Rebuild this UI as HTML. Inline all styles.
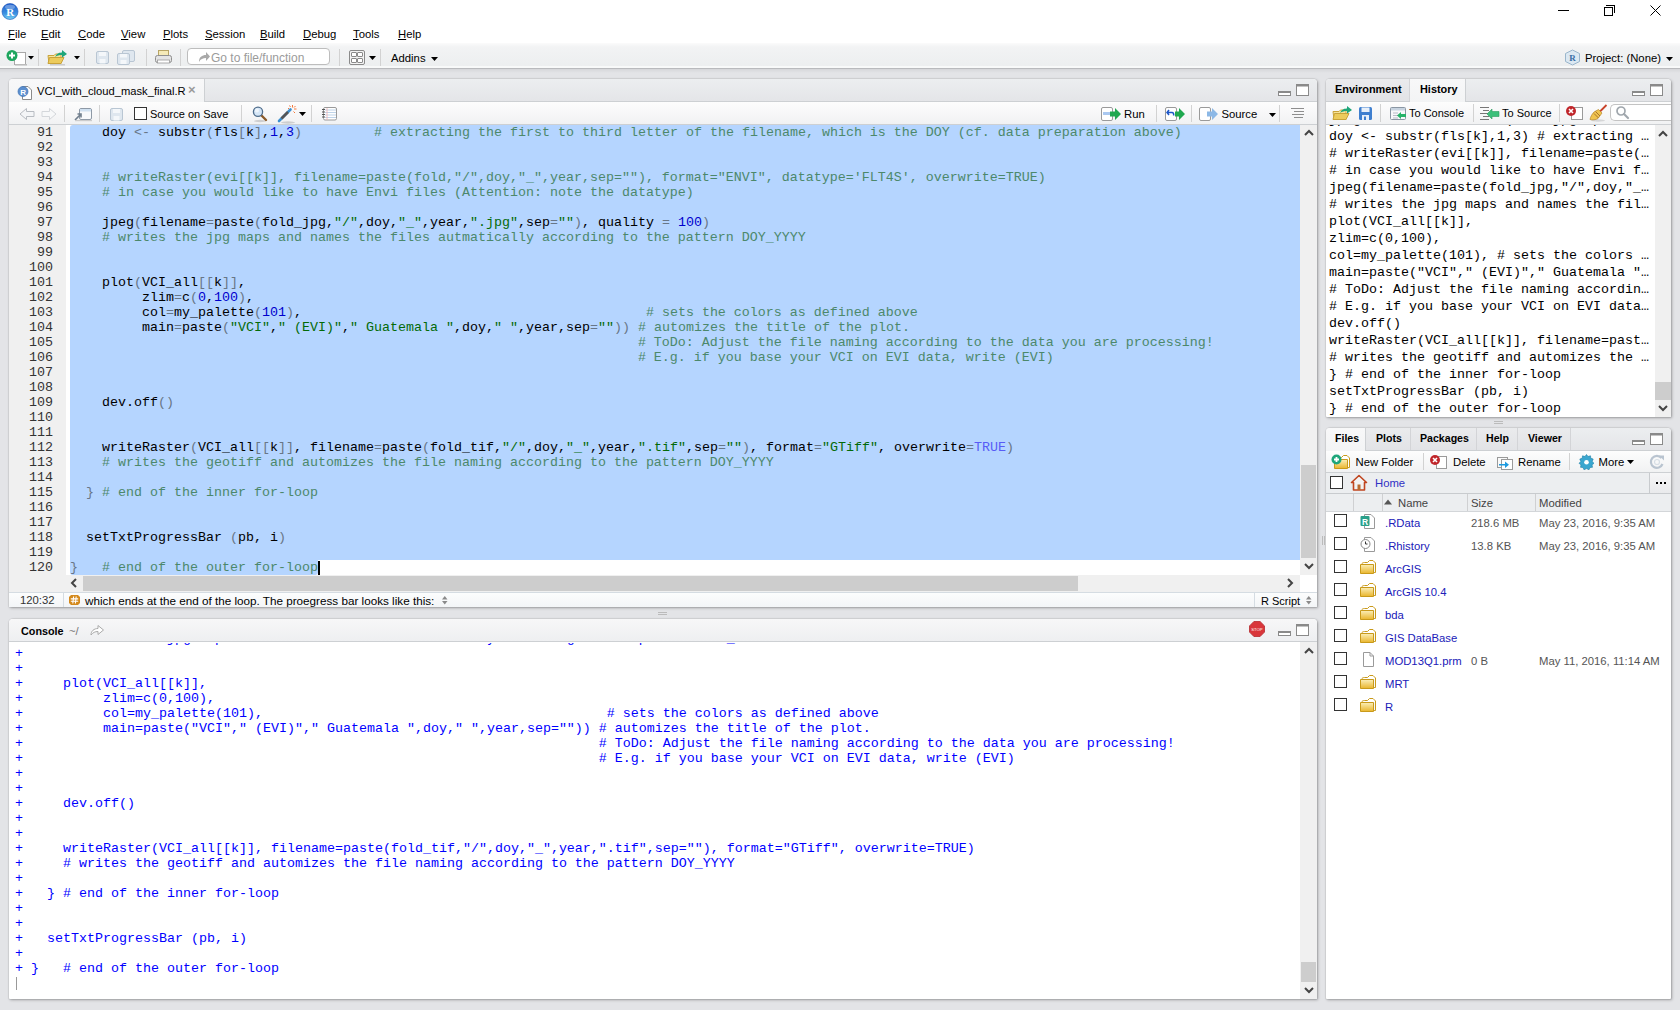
<!DOCTYPE html><html><head><meta charset="utf-8"><style>
*{box-sizing:border-box}
body{margin:0;width:1680px;height:1010px;overflow:hidden;background:#e3e4e7;position:relative;font-family:"Liberation Sans",sans-serif;font-size:12px;color:#000}
.a{position:absolute}
i{font-style:normal}
.mono{font-family:"Liberation Mono",monospace;font-size:13.33px;white-space:pre}
.c{color:#4C886B}.s{color:#036A07}.n{color:#0000CD}.k{color:#585CF6}.o{color:#687687}
.ln{position:absolute;height:15px;line-height:15px}
.pane{position:absolute;background:#fff;border-radius:4px 4px 1px 1px;box-shadow:0 0 0 1px rgba(0,0,0,.05),1px 1px 3px rgba(0,0,0,.3)}
u{text-decoration:underline}
</style></head><body>
<div class=a style="left:0px;top:0px;width:1680px;height:43px;background:#fff"></div>
<svg class=a style="left:1px;top:2px;" width="18" height="18" viewBox="0 0 18 18"><defs><linearGradient id="rg" x1="0" y1="0" x2="0" y2="1"><stop offset="0" stop-color="#1f5ecc"/><stop offset=".6" stop-color="#3a8ee0"/><stop offset="1" stop-color="#78d2f2"/></linearGradient></defs><circle cx="9" cy="9.5" r="8" fill="url(#rg)" stroke="#1a50b8" stroke-width=".6"/><ellipse cx="9" cy="5" rx="5" ry="2.2" fill="#fff" opacity=".3"/><text x="9.3" y="13.6" font-family="Liberation Serif" font-weight="bold" font-size="11" fill="#fff" text-anchor="middle">R</text></svg>
<div class=a style="left:1558px;top:10px;width:11px;height:1px;background:#000"></div>
<div class=a style="left:1606px;top:5px;width:9px;height:8px;border-top:1px solid #000;border-right:1px solid #000"></div>
<div class=a style="left:1604px;top:7px;width:9px;height:9px;border:1px solid #000;background:#fff"></div>
<svg class=a style="left:1650px;top:5px;" width="11" height="11" viewBox="0 0 11 11"><path d="M.5 .5L10.5 10.5M10.5 .5L.5 10.5" stroke="#000" stroke-width="1"/></svg>
<div class=a style="left:0px;top:43px;width:1680px;height:26px;background:linear-gradient(#fbfbfb 0,#f2f3f4 4px,#eceeef);border-bottom:1px solid #b9babd;box-shadow:inset 0 -2px 0 #f8f9f9"></div>
<div class=a style="left:0px;top:69px;width:1680px;height:4px;background:linear-gradient(rgba(0,0,0,.06),rgba(0,0,0,0))"></div>
<div class=a style="left:187px;top:48px;width:143px;height:17px;border:1px solid #bdbdbd;border-radius:4px;background:#fff"></div>
<div class=pane style="left:9px;top:79px;width:1308px;height:528px;"></div>
<div class=a style="left:9px;top:79px;width:1308px;height:23px;background:linear-gradient(#eceef0,#e4e5e8);border-bottom:1px solid #cdd0d3;border-radius:4px 4px 0 0"></div>
<div class=a style="left:9px;top:79px;width:196px;height:23px;background:linear-gradient(#f8f8f9,#f3f4f5);border-right:1px solid #cdd0d3;border-radius:4px 0 0 0"></div>
<svg class=a style="left:1276px;top:83px;" width="34" height="14" viewBox="0 0 34 14"><rect x="2.5" y="9.5" width="12" height="3" fill="#fff" stroke="#8a8a8a"/><rect x="2" y="8" width="13" height="2" fill="#8a8a8a"/><rect x="20.5" y="1.5" width="12" height="11" fill="#fff" stroke="#8a8a8a"/><rect x="20" y="1" width="13" height="2.5" fill="#8a8a8a"/></svg>
<div class=a style="left:9px;top:102px;width:1308px;height:23px;background:linear-gradient(#fdfdfd,#f1f2f3);border-bottom:1px solid #cdd0d3"></div>
<svg class=a style="left:17px;top:84px;" width="17" height="16" viewBox="0 0 17 16"><path d="M5.5 2.5H11L14.5 6V15.5H5.5Z" fill="#fff" stroke="#8a8a8a"/><circle cx="6" cy="7.5" r="5" fill="#5b8fcf" stroke="#3f72b3" stroke-width=".7"/><text x="6.1" y="10.6" font-size="8" font-family="Liberation Sans" font-weight="bold" fill="#fff" text-anchor="middle">R</text></svg>
<div class=a style="left:9px;top:125px;width:57px;height:450px;background:#f0f0f0"></div>
<div class=a style="left:70px;top:125px;width:1230px;height:435px;background:#B5D5FF;border-radius:3px 0 0 0"></div>
<div class=a style="left:70px;top:560px;width:248px;height:15px;background:#B5D5FF;border-radius:0 0 3px 3px"></div>
<div class=a style="left:318px;top:561px;width:2px;height:14px;background:#000"></div>
<div class="a mono" style="left:9px;top:125px;width:1291px;height:450px;overflow:hidden">
<div class=ln style="top:0px;left:0;width:44px;text-align:right;color:#333">91</div>
<div class=ln style="top:0px;left:61px">    doy <i class=o>&lt;-</i> substr<i class=o>(</i>fls<i class=o>[</i>k<i class=o>]</i>,<i class=n>1</i>,<i class=n>3</i><i class=o>)</i>         <i class=c># extracting the first to third letter of the filename, which is the DOY (cf. data preparation above)</i></div>
<div class=ln style="top:15px;left:0;width:44px;text-align:right;color:#333">92</div>
<div class=ln style="top:15px;left:61px"></div>
<div class=ln style="top:30px;left:0;width:44px;text-align:right;color:#333">93</div>
<div class=ln style="top:30px;left:61px"></div>
<div class=ln style="top:45px;left:0;width:44px;text-align:right;color:#333">94</div>
<div class=ln style="top:45px;left:61px">    <i class=c># writeRaster(evi[[k]], filename=paste(fold,&quot;/&quot;,doy,&quot;_&quot;,year,sep=&quot;&quot;), format=&quot;ENVI&quot;, datatype=&#x27;FLT4S&#x27;, overwrite=TRUE)</i></div>
<div class=ln style="top:60px;left:0;width:44px;text-align:right;color:#333">95</div>
<div class=ln style="top:60px;left:61px">    <i class=c># in case you would like to have Envi files (Attention: note the datatype)</i></div>
<div class=ln style="top:75px;left:0;width:44px;text-align:right;color:#333">96</div>
<div class=ln style="top:75px;left:61px"></div>
<div class=ln style="top:90px;left:0;width:44px;text-align:right;color:#333">97</div>
<div class=ln style="top:90px;left:61px">    jpeg<i class=o>(</i>filename<i class=o>=</i>paste<i class=o>(</i>fold_jpg,<i class=s>&quot;/&quot;</i>,doy,<i class=s>&quot;_&quot;</i>,year,<i class=s>&quot;.jpg&quot;</i>,sep<i class=o>=</i><i class=s>&quot;&quot;</i><i class=o>)</i>, quality <i class=o>=</i> <i class=n>100</i><i class=o>)</i></div>
<div class=ln style="top:105px;left:0;width:44px;text-align:right;color:#333">98</div>
<div class=ln style="top:105px;left:61px">    <i class=c># writes the jpg maps and names the files autmatically according to the pattern DOY_YYYY</i></div>
<div class=ln style="top:120px;left:0;width:44px;text-align:right;color:#333">99</div>
<div class=ln style="top:120px;left:61px"></div>
<div class=ln style="top:135px;left:0;width:44px;text-align:right;color:#333">100</div>
<div class=ln style="top:135px;left:61px"></div>
<div class=ln style="top:150px;left:0;width:44px;text-align:right;color:#333">101</div>
<div class=ln style="top:150px;left:61px">    plot<i class=o>(</i>VCI_all<i class=o>[</i><i class=o>[</i>k<i class=o>]</i><i class=o>]</i>,</div>
<div class=ln style="top:165px;left:0;width:44px;text-align:right;color:#333">102</div>
<div class=ln style="top:165px;left:61px">         zlim<i class=o>=</i>c<i class=o>(</i><i class=n>0</i>,<i class=n>100</i><i class=o>)</i>,</div>
<div class=ln style="top:180px;left:0;width:44px;text-align:right;color:#333">103</div>
<div class=ln style="top:180px;left:61px">         col<i class=o>=</i>my_palette<i class=o>(</i><i class=n>101</i><i class=o>)</i>,                                           <i class=c># sets the colors as defined above</i></div>
<div class=ln style="top:195px;left:0;width:44px;text-align:right;color:#333">104</div>
<div class=ln style="top:195px;left:61px">         main<i class=o>=</i>paste<i class=o>(</i><i class=s>&quot;VCI&quot;</i>,<i class=s>&quot; (EVI)&quot;</i>,<i class=s>&quot; Guatemala &quot;</i>,doy,<i class=s>&quot; &quot;</i>,year,sep<i class=o>=</i><i class=s>&quot;&quot;</i><i class=o>)</i><i class=o>)</i> <i class=c># automizes the title of the plot.</i></div>
<div class=ln style="top:210px;left:0;width:44px;text-align:right;color:#333">105</div>
<div class=ln style="top:210px;left:61px">                                                                       <i class=c># ToDo: Adjust the file naming according to the data you are processing!</i></div>
<div class=ln style="top:225px;left:0;width:44px;text-align:right;color:#333">106</div>
<div class=ln style="top:225px;left:61px">                                                                       <i class=c># E.g. if you base your VCI on EVI data, write (EVI)</i></div>
<div class=ln style="top:240px;left:0;width:44px;text-align:right;color:#333">107</div>
<div class=ln style="top:240px;left:61px"></div>
<div class=ln style="top:255px;left:0;width:44px;text-align:right;color:#333">108</div>
<div class=ln style="top:255px;left:61px"></div>
<div class=ln style="top:270px;left:0;width:44px;text-align:right;color:#333">109</div>
<div class=ln style="top:270px;left:61px">    dev.off<i class=o>(</i><i class=o>)</i></div>
<div class=ln style="top:285px;left:0;width:44px;text-align:right;color:#333">110</div>
<div class=ln style="top:285px;left:61px"></div>
<div class=ln style="top:300px;left:0;width:44px;text-align:right;color:#333">111</div>
<div class=ln style="top:300px;left:61px"></div>
<div class=ln style="top:315px;left:0;width:44px;text-align:right;color:#333">112</div>
<div class=ln style="top:315px;left:61px">    writeRaster<i class=o>(</i>VCI_all<i class=o>[</i><i class=o>[</i>k<i class=o>]</i><i class=o>]</i>, filename<i class=o>=</i>paste<i class=o>(</i>fold_tif,<i class=s>&quot;/&quot;</i>,doy,<i class=s>&quot;_&quot;</i>,year,<i class=s>&quot;.tif&quot;</i>,sep<i class=o>=</i><i class=s>&quot;&quot;</i><i class=o>)</i>, format<i class=o>=</i><i class=s>&quot;GTiff&quot;</i>, overwrite<i class=o>=</i><i class=k>TRUE</i><i class=o>)</i></div>
<div class=ln style="top:330px;left:0;width:44px;text-align:right;color:#333">113</div>
<div class=ln style="top:330px;left:61px">    <i class=c># writes the geotiff and automizes the file naming according to the pattern DOY_YYYY</i></div>
<div class=ln style="top:345px;left:0;width:44px;text-align:right;color:#333">114</div>
<div class=ln style="top:345px;left:61px"></div>
<div class=ln style="top:360px;left:0;width:44px;text-align:right;color:#333">115</div>
<div class=ln style="top:360px;left:61px">  <i class=o>}</i> <i class=c># end of the inner for-loop</i></div>
<div class=ln style="top:375px;left:0;width:44px;text-align:right;color:#333">116</div>
<div class=ln style="top:375px;left:61px"></div>
<div class=ln style="top:390px;left:0;width:44px;text-align:right;color:#333">117</div>
<div class=ln style="top:390px;left:61px"></div>
<div class=ln style="top:405px;left:0;width:44px;text-align:right;color:#333">118</div>
<div class=ln style="top:405px;left:61px">  setTxtProgressBar <i class=o>(</i>pb, i<i class=o>)</i></div>
<div class=ln style="top:420px;left:0;width:44px;text-align:right;color:#333">119</div>
<div class=ln style="top:420px;left:61px"></div>
<div class=ln style="top:435px;left:0;width:44px;text-align:right;color:#333">120</div>
<div class=ln style="top:435px;left:61px"><i class=o>}</i>   <i class=c># end of the outer for-loop</i></div>
</div>
<div class=a style="left:1300px;top:125px;width:17px;height:450px;background:#f0f0f0"></div>
<div class=a style="left:1301px;top:465px;width:15px;height:93px;background:#cdcdcd"></div>
<div class=a style="left:9px;top:575px;width:1291px;height:17px;background:#f0f0f0"></div>
<div class=a style="left:83px;top:576px;width:995px;height:15px;background:#cdcdcd"></div>
<div class=a style="left:9px;top:592px;width:1308px;height:15px;background:linear-gradient(#fcfdfd,#f3f5f7);border-top:1px solid #d5dce2"></div>
<div class=a style="left:63px;top:593px;width:1px;height:14px;background:#d5dce2"></div>
<div class=a style="left:1254px;top:593px;width:1px;height:14px;background:#d5dce2"></div>
<div class=pane style="left:9px;top:619px;width:1308px;height:380px;"></div>
<div class=a style="left:9px;top:619px;width:1308px;height:23px;background:linear-gradient(#f7f7f8,#eeeff1);border-bottom:1px solid #cdd0d3;border-radius:4px 4px 0 0"></div>
<svg class=a style="left:1276px;top:623px;" width="34" height="14" viewBox="0 0 34 14"><rect x="2.5" y="9.5" width="12" height="3" fill="#fff" stroke="#8a8a8a"/><rect x="2" y="8" width="13" height="2" fill="#8a8a8a"/><rect x="20.5" y="1.5" width="12" height="11" fill="#fff" stroke="#8a8a8a"/><rect x="20" y="1" width="13" height="2.5" fill="#8a8a8a"/></svg>
<div class="a mono" style="left:9px;top:643px;width:1291px;height:356px;overflow:hidden;color:#0000ff">
<div class=ln style="top:-12px;left:6px">+     # writes the jpg maps and names the files autmatically according to the pattern DOY_YYYY</div>
<div class=ln style="top:3px;left:6px">+ </div>
<div class=ln style="top:18px;left:6px">+ </div>
<div class=ln style="top:33px;left:6px">+     plot(VCI_all[[k]],</div>
<div class=ln style="top:48px;left:6px">+          zlim=c(0,100),</div>
<div class=ln style="top:63px;left:6px">+          col=my_palette(101),                                           # sets the colors as defined above</div>
<div class=ln style="top:78px;left:6px">+          main=paste(&quot;VCI&quot;,&quot; (EVI)&quot;,&quot; Guatemala &quot;,doy,&quot; &quot;,year,sep=&quot;&quot;)) # automizes the title of the plot.</div>
<div class=ln style="top:93px;left:6px">+                                                                        # ToDo: Adjust the file naming according to the data you are processing!</div>
<div class=ln style="top:108px;left:6px">+                                                                        # E.g. if you base your VCI on EVI data, write (EVI)</div>
<div class=ln style="top:123px;left:6px">+ </div>
<div class=ln style="top:138px;left:6px">+ </div>
<div class=ln style="top:153px;left:6px">+     dev.off()</div>
<div class=ln style="top:168px;left:6px">+ </div>
<div class=ln style="top:183px;left:6px">+ </div>
<div class=ln style="top:198px;left:6px">+     writeRaster(VCI_all[[k]], filename=paste(fold_tif,&quot;/&quot;,doy,&quot;_&quot;,year,&quot;.tif&quot;,sep=&quot;&quot;), format=&quot;GTiff&quot;, overwrite=TRUE)</div>
<div class=ln style="top:213px;left:6px">+     # writes the geotiff and automizes the file naming according to the pattern DOY_YYYY</div>
<div class=ln style="top:228px;left:6px">+ </div>
<div class=ln style="top:243px;left:6px">+   } # end of the inner for-loop</div>
<div class=ln style="top:258px;left:6px">+ </div>
<div class=ln style="top:273px;left:6px">+ </div>
<div class=ln style="top:288px;left:6px">+   setTxtProgressBar (pb, i)</div>
<div class=ln style="top:303px;left:6px">+ </div>
<div class=ln style="top:318px;left:6px">+ }   # end of the outer for-loop</div>
</div>
<div class=a style="left:16px;top:977px;width:1px;height:13px;background:#999"></div>
<div class=a style="left:1300px;top:642px;width:17px;height:357px;background:#f0f0f0"></div>
<div class=a style="left:1301px;top:962px;width:15px;height:20px;background:#cdcdcd"></div>
<div class=pane style="left:1326px;top:79px;width:345px;height:338px;"></div>
<div class=a style="left:1326px;top:79px;width:345px;height:23px;background:linear-gradient(#eceef0,#e4e5e8);border-bottom:1px solid #cdd0d3;border-radius:4px 4px 0 0"></div>
<div class=a style="left:1326px;top:79px;width:84px;height:22px;background:linear-gradient(#eaebed,#e2e3e6);border-right:1px solid #d3d4d7;border-radius:4px 0 0 0"></div>
<div class=a style="left:1410px;top:79px;width:56px;height:23px;background:linear-gradient(#f8f8f9,#f3f4f5);border-right:1px solid #cdd0d3"></div>
<svg class=a style="left:1630px;top:83px;" width="34" height="14" viewBox="0 0 34 14"><rect x="2.5" y="9.5" width="12" height="3" fill="#fff" stroke="#8a8a8a"/><rect x="2" y="8" width="13" height="2" fill="#8a8a8a"/><rect x="20.5" y="1.5" width="12" height="11" fill="#fff" stroke="#8a8a8a"/><rect x="20" y="1" width="13" height="2.5" fill="#8a8a8a"/></svg>
<div class=a style="left:1326px;top:102px;width:345px;height:23px;background:linear-gradient(#fdfdfd,#f1f2f3);border-bottom:1px solid #cdd0d3"></div>
<div class="a mono" style="left:1326px;top:125px;width:329px;height:292px;overflow:hidden">
<div class=a style="top:-14px;left:3px;height:17px;line-height:17px">jpeg_fls &lt;- list.files(fold_jpg, pattern=&quot;.jpg&quot;) # ...</div>
<div class=a style="top:3px;left:3px;height:17px;line-height:17px">doy &lt;- substr(fls[k],1,3) # extracting …</div>
<div class=a style="top:20px;left:3px;height:17px;line-height:17px"># writeRaster(evi[[k]], filename=paste(…</div>
<div class=a style="top:37px;left:3px;height:17px;line-height:17px"># in case you would like to have Envi f…</div>
<div class=a style="top:54px;left:3px;height:17px;line-height:17px">jpeg(filename=paste(fold_jpg,&quot;/&quot;,doy,&quot;_…</div>
<div class=a style="top:71px;left:3px;height:17px;line-height:17px"># writes the jpg maps and names the fil…</div>
<div class=a style="top:88px;left:3px;height:17px;line-height:17px">plot(VCI_all[[k]],</div>
<div class=a style="top:105px;left:3px;height:17px;line-height:17px">zlim=c(0,100),</div>
<div class=a style="top:122px;left:3px;height:17px;line-height:17px">col=my_palette(101), # sets the colors …</div>
<div class=a style="top:139px;left:3px;height:17px;line-height:17px">main=paste(&quot;VCI&quot;,&quot; (EVI)&quot;,&quot; Guatemala &quot;…</div>
<div class=a style="top:156px;left:3px;height:17px;line-height:17px"># ToDo: Adjust the file naming accordin…</div>
<div class=a style="top:173px;left:3px;height:17px;line-height:17px"># E.g. if you base your VCI on EVI data…</div>
<div class=a style="top:190px;left:3px;height:17px;line-height:17px">dev.off()</div>
<div class=a style="top:207px;left:3px;height:17px;line-height:17px">writeRaster(VCI_all[[k]], filename=past…</div>
<div class=a style="top:224px;left:3px;height:17px;line-height:17px"># writes the geotiff and automizes the …</div>
<div class=a style="top:241px;left:3px;height:17px;line-height:17px">} # end of the inner for-loop</div>
<div class=a style="top:258px;left:3px;height:17px;line-height:17px">setTxtProgressBar (pb, i)</div>
<div class=a style="top:275px;left:3px;height:17px;line-height:17px">} # end of the outer for-loop</div>
</div>
<div class=a style="left:1655px;top:125px;width:16px;height:292px;background:#f0f0f0"></div>
<div class=a style="left:1655px;top:382px;width:16px;height:18px;background:#cdcdcd"></div>
<div class=pane style="left:1326px;top:428px;width:345px;height:571px;"></div>
<div class=a style="left:1326px;top:428px;width:345px;height:23px;background:linear-gradient(#eceef0,#e4e5e8);border-bottom:1px solid #cdd0d3;border-radius:4px 4px 0 0"></div>
<div class=a style="left:1326px;top:428px;width:40px;height:23px;background:linear-gradient(#f8f8f9,#f3f4f5);border-right:1px solid #cdd0d3;border-radius:4px 0 0 0"></div>
<div class=a style="left:1366px;top:428px;width:45px;height:22px;background:linear-gradient(#eaebed,#e2e3e6);border-right:1px solid #d3d4d7"></div>
<div class=a style="left:1411px;top:428px;width:66px;height:22px;background:linear-gradient(#eaebed,#e2e3e6);border-right:1px solid #d3d4d7"></div>
<div class=a style="left:1477px;top:428px;width:41px;height:22px;background:linear-gradient(#eaebed,#e2e3e6);border-right:1px solid #d3d4d7"></div>
<div class=a style="left:1518px;top:428px;width:53px;height:22px;background:linear-gradient(#eaebed,#e2e3e6);border-right:1px solid #d3d4d7"></div>
<svg class=a style="left:1630px;top:432px;" width="34" height="14" viewBox="0 0 34 14"><rect x="2.5" y="9.5" width="12" height="3" fill="#fff" stroke="#8a8a8a"/><rect x="2" y="8" width="13" height="2" fill="#8a8a8a"/><rect x="20.5" y="1.5" width="12" height="11" fill="#fff" stroke="#8a8a8a"/><rect x="20" y="1" width="13" height="2.5" fill="#8a8a8a"/></svg>
<div class=a style="left:1326px;top:451px;width:345px;height:22px;background:linear-gradient(#fdfdfd,#f1f2f3);border-bottom:1px solid #cdd0d3"></div>
<svg class=a style="left:4px;top:49px;" width="28" height="17" viewBox="0 0 28 17"><rect x="10.5" y="3.5" width="11" height="12" fill="#fff" stroke="#a8a8a8"/><rect x="11" y="15" width="12" height="1.5" fill="#bbb"/><circle cx="8" cy="6.5" r="5.5" fill="#1ea65e"/><path d="M8 3.5V9.5M5 6.5H11" stroke="#fff" stroke-width="2"/></svg>
<svg class=a style="left:28px;top:56px;" width="7" height="4" viewBox="0 0 7 4"><path d="M0 0H6L3 3.5Z" fill="#000"/></svg>
<div class=a style="left:38px;top:49px;width:1px;height:17px;background:#d2d2d2"></div>
<svg class=a style="left:46px;top:49px;" width="24" height="17" viewBox="0 0 24 17"><path d="M2 6.5H8L9.5 5H15V14.5H3Z" fill="#f6e39a" stroke="#c9a33a"/><path d="M3.5 8.5H18L15 14.5H2Z" fill="#eccb5c" stroke="#c9a33a"/><path d="M9 8C11 4 14 3.5 16 3.5V1L21 5L16 8.5V6C13.5 6 11 6.5 9 8Z" fill="#1ea67a"/><rect x="4" y="15" width="15" height="1.5" fill="#ccc"/></svg>
<svg class=a style="left:74px;top:56px;" width="7" height="4" viewBox="0 0 7 4"><path d="M0 0H6L3 3.5Z" fill="#000"/></svg>
<div class=a style="left:84px;top:49px;width:1px;height:17px;background:#d2d2d2"></div>
<svg class=a style="left:95px;top:50px;" width="15" height="15" viewBox="0 0 15 15"><rect x="1.5" y="1.5" width="12" height="12" rx="1.5" fill="#dfe7ef" stroke="#b9c6d3"/><rect x="4" y="2" width="7" height="4" fill="#f4f7fa"/><rect x="4.5" y="9" width="6" height="4.5" fill="#f4f7fa"/></svg>
<svg class=a style="left:116px;top:49px;" width="22" height="16" viewBox="0 0 22 16"><rect x="6.5" y="1.5" width="12" height="11" rx="1.5" fill="#dfe7ef" stroke="#b9c6d3"/><rect x="1.5" y="4.5" width="12" height="11" rx="1.5" fill="#dfe7ef" stroke="#b9c6d3"/><rect x="4" y="5" width="7" height="3.5" fill="#f4f7fa"/><rect x="4.5" y="11" width="6" height="4" fill="#f4f7fa"/></svg>
<div class=a style="left:146px;top:49px;width:1px;height:17px;background:#d2d2d2"></div>
<svg class=a style="left:154px;top:49px;" width="19" height="16" viewBox="0 0 19 16"><rect x="4.5" y="1.5" width="10" height="6" fill="#f5eab8" stroke="#b8a565"/><rect x="1.5" y="6.5" width="16" height="7" rx="2" fill="#e4e4e4" stroke="#8f8f8f"/><rect x="3.5" y="11" width="12" height="3" fill="#fff" stroke="#9a9a9a" stroke-width=".8"/></svg>
<div class=a style="left:180px;top:49px;width:1px;height:17px;background:#d2d2d2"></div>
<svg class=a style="left:197px;top:50px;" width="14" height="13" viewBox="0 0 14 13"><path d="M2 12C2 7 5 5 9 5V2L13 6.5L9 11V8C6 8 3.5 9 2 12Z" fill="#a9a9a9"/></svg>
<div class=a style="left:339px;top:49px;width:1px;height:17px;background:#d2d2d2"></div>
<svg class=a style="left:348px;top:49px;" width="18" height="16" viewBox="0 0 18 16"><rect x="1.5" y="1.5" width="15" height="14" rx="1.5" fill="#f4f4f4" stroke="#8a8a8a"/><rect x="3.5" y="3.5" width="5" height="4" rx=".5" fill="#fff" stroke="#8a8a8a"/><rect x="9.5" y="3.5" width="5" height="4" rx=".5" fill="#fff" stroke="#8a8a8a"/><rect x="3.5" y="9.5" width="5" height="4" rx=".5" fill="#fff" stroke="#8a8a8a"/><rect x="9.5" y="9.5" width="5" height="4" rx=".5" fill="#fff" stroke="#8a8a8a"/></svg>
<svg class=a style="left:369px;top:56px;" width="7" height="4" viewBox="0 0 7 4"><path d="M0 0H7L3.5 4Z" fill="#000"/></svg>
<div class=a style="left:380px;top:49px;width:1px;height:17px;background:#d2d2d2"></div>
<svg class=a style="left:431px;top:57px;" width="7" height="4" viewBox="0 0 7 4"><path d="M0 0H7L3.5 4Z" fill="#000"/></svg>
<svg class=a style="left:1564px;top:49px;" width="17" height="17" viewBox="0 0 17 17"><path d="M8.5 1L15.5 4.5V12.5L8.5 16L1.5 12.5V4.5Z" fill="#dbe8f2" stroke="#9ab6cc"/><text x="8.5" y="12" font-family="Liberation Serif" font-size="9" fill="#3a6ea5" text-anchor="middle" font-weight="bold">R</text></svg>
<svg class=a style="left:1666px;top:57px;" width="7" height="4" viewBox="0 0 7 4"><path d="M0 0H7L3.5 4Z" fill="#000"/></svg>
<svg class=a style="left:19px;top:107px;" width="16" height="14" viewBox="0 0 16 14"><path d="M1 7L7.5 1.5V4.5H15V9.5H7.5V12.5Z" fill="#f4f5f7" stroke="#b8bcc2"/></svg>
<svg class=a style="left:41px;top:107px;" width="16" height="14" viewBox="0 0 16 14"><path d="M15 7L8.5 1.5V4.5H1V9.5H8.5V12.5Z" fill="#f7f8f9" stroke="#d4d7db"/></svg>
<div class=a style="left:64px;top:105px;width:1px;height:17px;background:#d2d2d2"></div>
<svg class=a style="left:73px;top:106px;" width="20" height="16" viewBox="0 0 20 16"><rect x="6.5" y="2.5" width="12" height="11" rx="1.5" fill="#f7f9fb" stroke="#8e99a6"/><rect x="7" y="3" width="11" height="2.5" fill="#cfe0f0"/><path d="M2 14L7 9M4.5 8H8V11.5" fill="none" stroke="#6f7d8c" stroke-width="1.6"/><rect x="2" y="14" width="17" height="1.2" fill="#ccc"/></svg>
<div class=a style="left:99px;top:105px;width:1px;height:17px;background:#d2d2d2"></div>
<svg class=a style="left:109px;top:107px;" width="16" height="15" viewBox="0 0 16 15"><rect x="1.5" y="1.5" width="12" height="12" rx="1.5" fill="#dfe7ef" stroke="#b9c6d3"/><rect x="4" y="2" width="7" height="4" fill="#f4f7fa"/><rect x="4.5" y="9" width="6" height="4.5" fill="#f4f7fa"/></svg>
<div class=a style="left:241px;top:105px;width:1px;height:17px;background:#d2d2d2"></div>
<svg class=a style="left:250px;top:104px;" width="20" height="20" viewBox="0 0 20 20"><ellipse cx="10" cy="17" rx="6" ry="1.2" fill="#000" opacity=".15"/><path d="M11.5 11.5L16 16" stroke="#8a5a2a" stroke-width="2.4" stroke-linecap="round"/><circle cx="8" cy="7.8" r="4.6" fill="#d5e6f7" stroke="#4f6d8c" stroke-width="1.3"/><circle cx="7" cy="6.5" r="2" fill="#fff" opacity=".6"/></svg>
<svg class=a style="left:276px;top:103px;" width="22" height="21" viewBox="0 0 22 21"><ellipse cx="12" cy="19.5" rx="7" ry="1.2" fill="#000" opacity=".15"/><path d="M3 18L14.5 6.5" stroke="#3a8fd0" stroke-width="2.6" stroke-linecap="round"/><path d="M5.5 15.5L12 9" stroke="#555" stroke-width="2.6"/><path d="M16.5 2V4.5M20.5 6H18M19.5 3L18 4.5M19 10L17.5 8.5M13.5 2.5L14.5 4M12 5.5H13" stroke="#f5793a" stroke-width="1"/></svg>
<svg class=a style="left:299px;top:112px;" width="7" height="4" viewBox="0 0 7 4"><path d="M0 0H7L3.5 4Z" fill="#000"/></svg>
<div class=a style="left:311px;top:105px;width:1px;height:17px;background:#d2d2d2"></div>
<svg class=a style="left:321px;top:106px;" width="19" height="16" viewBox="0 0 19 16"><rect x="2.5" y="1.5" width="13" height="12.5" rx="1.5" fill="#fff" stroke="#9a9a9a"/><path d="M4 4H15M4 6.5H15M4 9H15M4 11.5H15" stroke="#b8cfe6" stroke-width=".9"/><path d="M6 2V14" stroke="#f0b0b0" stroke-width=".8"/><path d="M1 3.5H4M1 6H4M1 8.5H4M1 11H4" stroke="#555" stroke-width="1"/></svg>
<svg class=a style="left:1100px;top:106px;" width="24" height="16" viewBox="0 0 24 16"><rect x="1.5" y="1.5" width="11" height="13" rx="1.5" fill="#fff" stroke="#9a9a9a"/><rect x="3" y="6" width="7" height="3" fill="#aac8f0"/><path d="M10 5.5H15V2L21 8L15 14V10.5H10Z" fill="#1fa84f"/></svg>
<div class=a style="left:1156px;top:105px;width:1px;height:17px;background:#d2d2d2"></div>
<svg class=a style="left:1164px;top:106px;" width="24" height="16" viewBox="0 0 24 16"><rect x="1.5" y="1.5" width="11" height="13" rx="1.5" fill="#fff" stroke="#9a9a9a"/><path d="M5 4L3 6.5L5 9M3.5 6.5H8C9.5 6.5 10 8 9.5 9.5" fill="none" stroke="#1b55c8" stroke-width="1.5"/><path d="M11 5.5H15V2L21 8L15 14V10.5H11Z" fill="#1fa84f"/></svg>
<div class=a style="left:1191px;top:105px;width:1px;height:17px;background:#d2d2d2"></div>
<svg class=a style="left:1198px;top:106px;" width="24" height="16" viewBox="0 0 24 16"><rect x="1.5" y="1.5" width="11" height="13" rx="1.5" fill="#fff" stroke="#9a9a9a"/><path d="M9 5.5H14V2L20 8L14 14V10.5H9Z" fill="#8cb8e6"/></svg>
<svg class=a style="left:1269px;top:113px;" width="7" height="4" viewBox="0 0 7 4"><path d="M0 0H7L3.5 4Z" fill="#000"/></svg>
<div class=a style="left:1279px;top:105px;width:1px;height:17px;background:#d2d2d2"></div>
<svg class=a style="left:1290px;top:107px;" width="15" height="13" viewBox="0 0 15 13"><path d="M1 1.5H14M4 4.5H14M2 7.5H14M4 10.5H13" stroke="#8e8e8e" stroke-width="1"/></svg>
<svg class=a style="left:1304px;top:129px;" width="10" height="7" viewBox="0 0 10 7"><path d="M1 6L5 2L9 6" fill="none" stroke="#444" stroke-width="2"/></svg>
<svg class=a style="left:1304px;top:563px;" width="10" height="7" viewBox="0 0 10 7"><path d="M1 1L5 5L9 1" fill="none" stroke="#444" stroke-width="2"/></svg>
<svg class=a style="left:70px;top:578px;" width="7" height="10" viewBox="0 0 7 10"><path d="M6 1L2 5L6 9" fill="none" stroke="#444" stroke-width="2"/></svg>
<svg class=a style="left:1287px;top:578px;" width="7" height="10" viewBox="0 0 7 10"><path d="M1 1L5 5L1 9" fill="none" stroke="#444" stroke-width="2"/></svg>
<svg class=a style="left:69px;top:595px;" width="11" height="10" viewBox="0 0 11 10"><path d="M2 0H9L11 2V8L9 10H2L0 8V2Z" fill="#d4891c"/><path d="M4.6 1.5L3.8 8.5M7.2 1.5L6.4 8.5M1.8 3.9H9.2M1.8 6.3H9.2" stroke="#fff" stroke-width="1.1"/></svg>
<svg class=a style="left:442px;top:596px;" width="6" height="9" viewBox="0 0 6 9"><path d="M0 3.5L2.75 0L5.5 3.5Z" fill="#8a8a8a"/><path d="M0 5L2.75 8.5L5.5 5Z" fill="#8a8a8a"/></svg>
<svg class=a style="left:1306px;top:596px;" width="6" height="9" viewBox="0 0 6 9"><path d="M0 3.5L2.75 0L5.5 3.5Z" fill="#8a8a8a"/><path d="M0 5L2.75 8.5L5.5 5Z" fill="#8a8a8a"/></svg>
<svg class=a style="left:89px;top:624px;" width="16" height="12" viewBox="0 0 16 12"><path d="M2 11C2 7 5 4.5 9 4.5V1.5L14.5 6L9 10.5V7.5C6 7.5 4 8.5 2 11Z" fill="#fff" stroke="#aaa"/></svg>
<svg class=a style="left:1249px;top:621px;" width="16" height="16" viewBox="0 0 16 16"><path d="M4.9 .5H11.1L15.5 4.9V11.1L11.1 15.5H4.9L.5 11.1V4.9Z" fill="#d9363b" stroke="#b52a2f" stroke-width=".8"/><text x="8" y="10" font-size="4.2" font-family="Liberation Sans" fill="#fff" text-anchor="middle">STOP</text></svg>
<svg class=a style="left:1304px;top:647px;" width="10" height="7" viewBox="0 0 10 7"><path d="M1 6L5 2L9 6" fill="none" stroke="#444" stroke-width="2"/></svg>
<svg class=a style="left:1304px;top:987px;" width="10" height="7" viewBox="0 0 10 7"><path d="M1 1L5 5L9 1" fill="none" stroke="#444" stroke-width="2"/></svg>
<svg class=a style="left:1331px;top:105px;" width="23" height="17" viewBox="0 0 23 17"><path d="M2 6.5H8L9.5 5H15V14.5H3Z" fill="#f6e39a" stroke="#c9a33a"/><path d="M3.5 8.5H18L15 14.5H2Z" fill="#eccb5c" stroke="#c9a33a"/><path d="M9 8C11 4 14 3.5 16 3.5V1L21 5L16 8.5V6C13.5 6 11 6.5 9 8Z" fill="#1ea67a"/></svg>
<svg class=a style="left:1358px;top:106px;" width="15" height="15" viewBox="0 0 15 15"><rect x="1" y="1" width="13" height="13" rx="1.5" fill="#3f7fcf"/><rect x="3.5" y="1.5" width="8" height="4.5" fill="#e8f0fa"/><rect x="4" y="9" width="7" height="5" fill="#e8f0fa"/><rect x="6" y="10.5" width="2" height="3.5" fill="#3f7fcf"/></svg>
<div class=a style="left:1380px;top:104px;width:1px;height:18px;background:#d2d2d2"></div>
<svg class=a style="left:1389px;top:106px;" width="19" height="15" viewBox="0 0 19 15"><rect x="1.5" y="1.5" width="15" height="12" rx="1" fill="#f7f8fa" stroke="#8a96a3"/><rect x="2" y="2" width="14" height="2.5" fill="#c7d3e0"/><path d="M4 7H9M4 9.5H9M4 12H9" stroke="#aab" stroke-width=".8"/><path d="M8 9.5L12 6V8H17V11H12V13Z" fill="#27b36a"/></svg>
<div class=a style="left:1473px;top:104px;width:1px;height:18px;background:#d2d2d2"></div>
<svg class=a style="left:1479px;top:106px;" width="22" height="15" viewBox="0 0 22 15"><path d="M1 1.5H10M4 4.5H10M1 7.5H10M4 10.5H10M1 13.5H10" stroke="#777" stroke-width="1"/><path d="M8 8L13 3V5.5H20V10.5H13V13Z" fill="#3cc07a" stroke="#2a9a5c" stroke-width=".6"/></svg>
<div class=a style="left:1559px;top:104px;width:1px;height:18px;background:#d2d2d2"></div>
<svg class=a style="left:1565px;top:105px;" width="20" height="16" viewBox="0 0 20 16"><rect x="6.5" y="2.5" width="11" height="12" fill="#fff" stroke="#9a9a9a"/><circle cx="6" cy="6" r="5" fill="#c0262b"/><path d="M4 4L8 8M8 4L4 8" stroke="#fff" stroke-width="1.6"/></svg>
<svg class=a style="left:1589px;top:104px;" width="19" height="18" viewBox="0 0 19 18"><ellipse cx="9" cy="16.5" rx="7" ry="1.2" fill="#000" opacity=".12"/><path d="M17.5 1L11 7.5" stroke="#c8432b" stroke-width="1.8"/><path d="M9.5 5.5L13 9L9 14.5C7 16 3 16 1 15.5C1.5 13 3 10 5 8Z" fill="#f0c44e" stroke="#b8862a" stroke-width=".7"/><path d="M6.5 7.5L11 12M5 9.5L9.5 14" stroke="#a8742a" stroke-width="1"/></svg>
<div class=a style="left:1610px;top:104px;width:61px;height:17px;border:1px solid #c3c3c3;border-right:0;border-radius:5px 0 0 5px;background:#fff"></div>
<svg class=a style="left:1615px;top:105px;" width="15" height="15" viewBox="0 0 15 15"><circle cx="6" cy="6" r="4" fill="none" stroke="#a0a7ad" stroke-width="1.7"/><path d="M9 9L13 13" stroke="#a0a7ad" stroke-width="2.2" stroke-linecap="round"/></svg>
<svg class=a style="left:1658px;top:130px;" width="10" height="7" viewBox="0 0 10 7"><path d="M1 6L5 2L9 6" fill="none" stroke="#444" stroke-width="2"/></svg>
<svg class=a style="left:1658px;top:405px;" width="10" height="7" viewBox="0 0 10 7"><path d="M1 1L5 5L9 1" fill="none" stroke="#444" stroke-width="2"/></svg>
<svg class=a style="left:1331px;top:454px;" width="21" height="16" viewBox="0 0 21 16"><path d="M4.5 5.5C5 4 6 3.5 7.5 3.5H10.5L12.5 1.5H16L18.5 4V13.5H4.5Z" fill="#fff" stroke="#c99a1a"/><path d="M3.5 5.5H16.5V14.5H3.5Z" fill="url(#fg)" stroke="#c99a1a"/><circle cx="5.5" cy="5.5" r="5" fill="#1ea67a"/><path d="M5.5 3V8M3 5.5H8" stroke="#fff" stroke-width="1.8"/></svg>
<div class=a style="left:1423px;top:453px;width:1px;height:17px;background:#d2d2d2"></div>
<svg class=a style="left:1429px;top:454px;" width="19" height="16" viewBox="0 0 19 16"><rect x="7.5" y="2.5" width="10" height="12" fill="#fff" stroke="#9a9a9a"/><circle cx="6" cy="6" r="5" fill="#c0262b"/><path d="M4 4L8 8M8 4L4 8" stroke="#fff" stroke-width="1.6"/></svg>
<svg class=a style="left:1496px;top:455px;" width="19" height="15" viewBox="0 0 19 15"><rect x="1.5" y="2.5" width="10" height="10" fill="#fafafa" stroke="#9a9a9a"/><rect x="5.5" y="4.5" width="11" height="10" fill="#fff" stroke="#9a9a9a"/><path d="M3 9H9V6.5L13 9.8L9 13V10.5H3Z" fill="#1e9be0"/></svg>
<div class=a style="left:1569px;top:453px;width:1px;height:17px;background:#d2d2d2"></div>
<svg class=a style="left:1578px;top:454px;" width="17" height="16" viewBox="0 0 17 16"><path d="M8.5 0.5L10 2.5L12.5 1.8L12.8 4.3L15.2 5L14.2 7.5L16 9.3L14 10.8L14.5 13.3L12 13.5L11 15.8L8.5 14.6L6 15.8L5 13.5L2.5 13.3L3 10.8L1 9.3L2.8 7.5L1.8 5L4.2 4.3L4.5 1.8L7 2.5Z" fill="#3aa6cf" stroke="#1f7fa6" stroke-width=".6"/><circle cx="8.5" cy="8.3" r="2.3" fill="#fff"/></svg>
<svg class=a style="left:1627px;top:460px;" width="7" height="4" viewBox="0 0 7 4"><path d="M0 0H7L3.5 4Z" fill="#000"/></svg>
<svg class=a style="left:1649px;top:454px;" width="17" height="16" viewBox="0 0 17 16"><path d="M12.5 4A6 6 0 1 0 13.5 10" fill="none" stroke="#b9c4d0" stroke-width="2.2"/><path d="M10 1.5H15V6.5Z" fill="#b9c4d0"/><circle cx="8" cy="8" r="2.5" fill="none" stroke="#d7dee5" stroke-width="1.2"/></svg>
<div class=a style="left:134px;top:107px;width:13px;height:13px;border:1px solid #333;background:#fff"></div>
<div class=a style="left:1326px;top:473px;width:345px;height:21px;background:#eceef0;border-bottom:1px solid #c8cbce"></div>
<div class=a style="left:1649px;top:473px;width:22px;height:20px;background:linear-gradient(#f6f6f7,#e9eaec);border-left:1px solid #c8cbce"></div>
<div class=a style="left:1656px;top:482px;width:2px;height:2px;background:#000;box-shadow:4px 0 #000,8px 0 #000"></div>
<div class=a style="left:1330px;top:476px;width:13px;height:13px;border:1px solid #333;background:#fff"></div>
<svg class=a style="left:1350px;top:474px;" width="18" height="17" viewBox="0 0 18 17"><path d="M9 1.5L1.5 8.5H3.5V16H14.5V8.5H16.5Z" fill="#f2f2f2" stroke="#c0451f" stroke-width="1.6" stroke-linejoin="round"/><rect x="7.5" y="10.5" width="3" height="5.5" fill="#b86a2e"/></svg>
<div class=a style="left:1326px;top:494px;width:345px;height:18px;background:#eceef0;border-bottom:1px solid #d3d6d9"></div>
<div class=a style="left:1353px;top:494px;width:1px;height:17px;background:#cfd0d2"></div>
<div class=a style="left:1382px;top:494px;width:1px;height:17px;background:#cfd0d2"></div>
<div class=a style="left:1467px;top:494px;width:1px;height:17px;background:#cfd0d2"></div>
<div class=a style="left:1535px;top:494px;width:1px;height:17px;background:#cfd0d2"></div>
<svg class=a style="left:1384px;top:499px;" width="8" height="6" viewBox="0 0 8 6"><path d="M0 5.5L4 0.5L8 5.5Z" fill="#555"/></svg>
<div class=a style="left:1334px;top:514px;width:13px;height:13px;border:1px solid #333;background:#fff"></div>
<svg class=a style="left:1359px;top:512px;" width="18" height="18" viewBox="0 0 18 18"><path d="M5.5 2.5H12L15.5 6V16.5H5.5Z" fill="#fff" stroke="#9a9a9a"/><rect x="1.5" y="4" width="9" height="10" rx="1" fill="#2aa08a"/><text x="6" y="12.5" font-size="8.5" font-family="Liberation Sans" fill="#fff" text-anchor="middle" font-weight="bold">R</text></svg>
<div class=a style="left:1334px;top:537px;width:13px;height:13px;border:1px solid #333;background:#fff"></div>
<svg class=a style="left:1359px;top:535px;" width="18" height="18" viewBox="0 0 18 18"><path d="M5.5 2.5H12L15.5 6V16.5H5.5Z" fill="#fff" stroke="#9a9a9a"/><circle cx="6.5" cy="9" r="4.5" fill="#fff" stroke="#888"/><path d="M6.5 6.5V9H8.5" stroke="#333" fill="none"/></svg>
<div class=a style="left:1334px;top:560px;width:13px;height:13px;border:1px solid #333;background:#fff"></div>
<svg class=a style="left:1360px;top:559px;" width="17" height="16" viewBox="0 0 17 16"><defs><linearGradient id="fg" x1="0" y1="0" x2="0" y2="1"><stop offset="0" stop-color="#fbefb8"/><stop offset="1" stop-color="#e9b52c"/></linearGradient></defs><path d="M1.5 5.5C2 4 3 3.5 4.5 3.5H7.5L9.5 1.5H13L15.5 4V13.5H1.5Z" fill="#fff" stroke="#c99a1a"/><path d="M13.5 5V13.5" stroke="#d9e2ee" stroke-width="1.5"/><path d="M0.5 5.5H13.5V14.5H0.5Z" fill="url(#fg)" stroke="#c99a1a"/></svg>
<div class=a style="left:1334px;top:583px;width:13px;height:13px;border:1px solid #333;background:#fff"></div>
<svg class=a style="left:1360px;top:582px;" width="17" height="16" viewBox="0 0 17 16"><defs><linearGradient id="fg" x1="0" y1="0" x2="0" y2="1"><stop offset="0" stop-color="#fbefb8"/><stop offset="1" stop-color="#e9b52c"/></linearGradient></defs><path d="M1.5 5.5C2 4 3 3.5 4.5 3.5H7.5L9.5 1.5H13L15.5 4V13.5H1.5Z" fill="#fff" stroke="#c99a1a"/><path d="M13.5 5V13.5" stroke="#d9e2ee" stroke-width="1.5"/><path d="M0.5 5.5H13.5V14.5H0.5Z" fill="url(#fg)" stroke="#c99a1a"/></svg>
<div class=a style="left:1334px;top:606px;width:13px;height:13px;border:1px solid #333;background:#fff"></div>
<svg class=a style="left:1360px;top:605px;" width="17" height="16" viewBox="0 0 17 16"><defs><linearGradient id="fg" x1="0" y1="0" x2="0" y2="1"><stop offset="0" stop-color="#fbefb8"/><stop offset="1" stop-color="#e9b52c"/></linearGradient></defs><path d="M1.5 5.5C2 4 3 3.5 4.5 3.5H7.5L9.5 1.5H13L15.5 4V13.5H1.5Z" fill="#fff" stroke="#c99a1a"/><path d="M13.5 5V13.5" stroke="#d9e2ee" stroke-width="1.5"/><path d="M0.5 5.5H13.5V14.5H0.5Z" fill="url(#fg)" stroke="#c99a1a"/></svg>
<div class=a style="left:1334px;top:629px;width:13px;height:13px;border:1px solid #333;background:#fff"></div>
<svg class=a style="left:1360px;top:628px;" width="17" height="16" viewBox="0 0 17 16"><defs><linearGradient id="fg" x1="0" y1="0" x2="0" y2="1"><stop offset="0" stop-color="#fbefb8"/><stop offset="1" stop-color="#e9b52c"/></linearGradient></defs><path d="M1.5 5.5C2 4 3 3.5 4.5 3.5H7.5L9.5 1.5H13L15.5 4V13.5H1.5Z" fill="#fff" stroke="#c99a1a"/><path d="M13.5 5V13.5" stroke="#d9e2ee" stroke-width="1.5"/><path d="M0.5 5.5H13.5V14.5H0.5Z" fill="url(#fg)" stroke="#c99a1a"/></svg>
<div class=a style="left:1334px;top:652px;width:13px;height:13px;border:1px solid #333;background:#fff"></div>
<svg class=a style="left:1360px;top:651px;" width="16" height="17" viewBox="0 0 16 17"><path d="M3.5 1.5H10L13.5 5V15.5H3.5Z" fill="#fff" stroke="#9a9a9a"/><path d="M10 1.5V5H13.5" fill="none" stroke="#9a9a9a"/></svg>
<div class=a style="left:1334px;top:675px;width:13px;height:13px;border:1px solid #333;background:#fff"></div>
<svg class=a style="left:1360px;top:674px;" width="17" height="16" viewBox="0 0 17 16"><defs><linearGradient id="fg" x1="0" y1="0" x2="0" y2="1"><stop offset="0" stop-color="#fbefb8"/><stop offset="1" stop-color="#e9b52c"/></linearGradient></defs><path d="M1.5 5.5C2 4 3 3.5 4.5 3.5H7.5L9.5 1.5H13L15.5 4V13.5H1.5Z" fill="#fff" stroke="#c99a1a"/><path d="M13.5 5V13.5" stroke="#d9e2ee" stroke-width="1.5"/><path d="M0.5 5.5H13.5V14.5H0.5Z" fill="url(#fg)" stroke="#c99a1a"/></svg>
<div class=a style="left:1334px;top:698px;width:13px;height:13px;border:1px solid #333;background:#fff"></div>
<svg class=a style="left:1360px;top:697px;" width="17" height="16" viewBox="0 0 17 16"><defs><linearGradient id="fg" x1="0" y1="0" x2="0" y2="1"><stop offset="0" stop-color="#fbefb8"/><stop offset="1" stop-color="#e9b52c"/></linearGradient></defs><path d="M1.5 5.5C2 4 3 3.5 4.5 3.5H7.5L9.5 1.5H13L15.5 4V13.5H1.5Z" fill="#fff" stroke="#c99a1a"/><path d="M13.5 5V13.5" stroke="#d9e2ee" stroke-width="1.5"/><path d="M0.5 5.5H13.5V14.5H0.5Z" fill="url(#fg)" stroke="#c99a1a"/></svg>
<div class=a style="left:1322px;top:536px;width:1px;height:9px;background:#bbb;box-shadow:2px 0 #bbb"></div>
<div class=a style="left:658px;top:612px;width:9px;height:1px;background:#bbb;box-shadow:0 2px #bbb"></div>
<div class=a style="left:1494px;top:421px;width:9px;height:1px;background:#bbb;box-shadow:0 2px #bbb"></div>
<div class=a style="left:23px;top:7.27px;font-size:11.5px;line-height:11.5px;color:#000;white-space:pre;">RStudio</div>
<div class=a style="left:8px;top:29.43px;font-size:11.3px;line-height:11.3px;color:#000;white-space:pre;"><u>F</u>ile</div>
<div class=a style="left:41px;top:29.43px;font-size:11.3px;line-height:11.3px;color:#000;white-space:pre;"><u>E</u>dit</div>
<div class=a style="left:78px;top:29.43px;font-size:11.3px;line-height:11.3px;color:#000;white-space:pre;"><u>C</u>ode</div>
<div class=a style="left:121px;top:29.43px;font-size:11.3px;line-height:11.3px;color:#000;white-space:pre;"><u>V</u>iew</div>
<div class=a style="left:163px;top:29.43px;font-size:11.3px;line-height:11.3px;color:#000;white-space:pre;"><u>P</u>lots</div>
<div class=a style="left:205px;top:29.43px;font-size:11.3px;line-height:11.3px;color:#000;white-space:pre;"><u>S</u>ession</div>
<div class=a style="left:260px;top:29.43px;font-size:11.3px;line-height:11.3px;color:#000;white-space:pre;"><u>B</u>uild</div>
<div class=a style="left:303px;top:29.43px;font-size:11.3px;line-height:11.3px;color:#000;white-space:pre;"><u>D</u>ebug</div>
<div class=a style="left:353px;top:29.43px;font-size:11.3px;line-height:11.3px;color:#000;white-space:pre;"><u>T</u>ools</div>
<div class=a style="left:398px;top:29.43px;font-size:11.3px;line-height:11.3px;color:#000;white-space:pre;"><u>H</u>elp</div>
<div class=a style="left:211px;top:51.84px;font-size:12px;line-height:12px;color:#9b9b9b;white-space:pre;">Go to file/function</div>
<div class=a style="left:391px;top:53.43px;font-size:11.3px;line-height:11.3px;color:#000;white-space:pre;">Addins</div>
<div class=a style="left:1585px;top:53.43px;font-size:11.3px;line-height:11.3px;color:#000;white-space:pre;">Project: (None)</div>
<div class=a style="left:37px;top:85.52px;font-size:11.2px;line-height:11.2px;color:#000;white-space:pre;">VCI_with_cloud_mask_final.R</div>
<div class=a style="left:188px;top:83.00px;font-size:13px;line-height:13px;font-weight:bold;color:#9a9a9a;white-space:pre;">&#215;</div>
<div class=a style="left:150px;top:108.69px;font-size:11px;line-height:11px;color:#000;white-space:pre;">Source on Save</div>
<div class=a style="left:1124px;top:109.43px;font-size:11.3px;line-height:11.3px;color:#000;white-space:pre;">Run</div>
<div class=a style="left:1221.5px;top:109.43px;font-size:11.3px;line-height:11.3px;color:#000;white-space:pre;">Source</div>
<div class=a style="left:20px;top:595.43px;font-size:11.3px;line-height:11.3px;color:#333;white-space:pre;">120:32</div>
<div class=a style="left:85px;top:595.10px;font-size:11.7px;line-height:11.7px;color:#000;white-space:pre;">which ends at the end of the loop. The proegress bar looks like this:</div>
<div class=a style="left:1261px;top:595.69px;font-size:11px;line-height:11px;color:#000;white-space:pre;">R Script</div>
<div class=a style="left:21px;top:625.86px;font-size:10.8px;line-height:10.8px;font-weight:bold;color:#000;white-space:pre;">Console</div>
<div class=a style="left:69px;top:626.43px;font-size:11.3px;line-height:11.3px;color:#777;white-space:pre;">~/</div>
<div class=a style="left:1335px;top:83.77px;font-size:10.9px;line-height:10.9px;font-weight:bold;color:#000;white-space:pre;">Environment</div>
<div class=a style="left:1420px;top:83.77px;font-size:10.9px;line-height:10.9px;font-weight:bold;color:#000;white-space:pre;">History</div>
<div class=a style="left:1409px;top:107.69px;font-size:11px;line-height:11px;color:#000;white-space:pre;">To Console</div>
<div class=a style="left:1502px;top:107.69px;font-size:11px;line-height:11px;color:#000;white-space:pre;">To Source</div>
<div class=a style="left:1335px;top:433.03px;font-size:10.6px;line-height:10.6px;font-weight:bold;color:#000;white-space:pre;">Files</div>
<div class=a style="left:1376px;top:433.03px;font-size:10.6px;line-height:10.6px;font-weight:bold;color:#000;white-space:pre;">Plots</div>
<div class=a style="left:1420px;top:433.03px;font-size:10.6px;line-height:10.6px;font-weight:bold;color:#000;white-space:pre;">Packages</div>
<div class=a style="left:1486px;top:433.03px;font-size:10.6px;line-height:10.6px;font-weight:bold;color:#000;white-space:pre;">Help</div>
<div class=a style="left:1528px;top:433.03px;font-size:10.6px;line-height:10.6px;font-weight:bold;color:#000;white-space:pre;">Viewer</div>
<div class=a style="left:1355.5px;top:457.43px;font-size:11.3px;line-height:11.3px;color:#000;white-space:pre;">New Folder</div>
<div class=a style="left:1453px;top:457.43px;font-size:11.3px;line-height:11.3px;color:#000;white-space:pre;">Delete</div>
<div class=a style="left:1518px;top:457.43px;font-size:11.3px;line-height:11.3px;color:#000;white-space:pre;">Rename</div>
<div class=a style="left:1598.5px;top:457.43px;font-size:11.3px;line-height:11.3px;color:#000;white-space:pre;">More</div>
<div class=a style="left:1375px;top:478.43px;font-size:11.3px;line-height:11.3px;color:#3131c4;white-space:pre;">Home</div>
<div class=a style="left:1398px;top:498.43px;font-size:11.3px;line-height:11.3px;color:#444;white-space:pre;">Name</div>
<div class=a style="left:1471px;top:498.43px;font-size:11.3px;line-height:11.3px;color:#444;white-space:pre;">Size</div>
<div class=a style="left:1539px;top:498.43px;font-size:11.3px;line-height:11.3px;color:#444;white-space:pre;">Modified</div>
<div class=a style="left:1385px;top:518.43px;font-size:11.3px;line-height:11.3px;color:#2020b8;white-space:pre;">.RData</div>
<div class=a style="left:1471px;top:518.43px;font-size:11.3px;line-height:11.3px;color:#555;white-space:pre;">218.6 MB</div>
<div class=a style="left:1539px;top:518.43px;font-size:11.3px;line-height:11.3px;color:#555;white-space:pre;">May 23, 2016, 9:35 AM</div>
<div class=a style="left:1385px;top:541.43px;font-size:11.3px;line-height:11.3px;color:#2020b8;white-space:pre;">.Rhistory</div>
<div class=a style="left:1471px;top:541.43px;font-size:11.3px;line-height:11.3px;color:#555;white-space:pre;">13.8 KB</div>
<div class=a style="left:1539px;top:541.43px;font-size:11.3px;line-height:11.3px;color:#555;white-space:pre;">May 23, 2016, 9:35 AM</div>
<div class=a style="left:1385px;top:564.43px;font-size:11.3px;line-height:11.3px;color:#2020b8;white-space:pre;">ArcGIS</div>
<div class=a style="left:1385px;top:587.43px;font-size:11.3px;line-height:11.3px;color:#2020b8;white-space:pre;">ArcGIS 10.4</div>
<div class=a style="left:1385px;top:610.43px;font-size:11.3px;line-height:11.3px;color:#2020b8;white-space:pre;">bda</div>
<div class=a style="left:1385px;top:633.43px;font-size:11.3px;line-height:11.3px;color:#2020b8;white-space:pre;">GIS DataBase</div>
<div class=a style="left:1385px;top:656.43px;font-size:11.3px;line-height:11.3px;color:#2020b8;white-space:pre;">MOD13Q1.prm</div>
<div class=a style="left:1471px;top:656.43px;font-size:11.3px;line-height:11.3px;color:#555;white-space:pre;">0 B</div>
<div class=a style="left:1539px;top:656.43px;font-size:11.3px;line-height:11.3px;color:#555;white-space:pre;">May 11, 2016, 11:14 AM</div>
<div class=a style="left:1385px;top:679.43px;font-size:11.3px;line-height:11.3px;color:#2020b8;white-space:pre;">MRT</div>
<div class=a style="left:1385px;top:702.43px;font-size:11.3px;line-height:11.3px;color:#2020b8;white-space:pre;">R</div>
</body></html>
